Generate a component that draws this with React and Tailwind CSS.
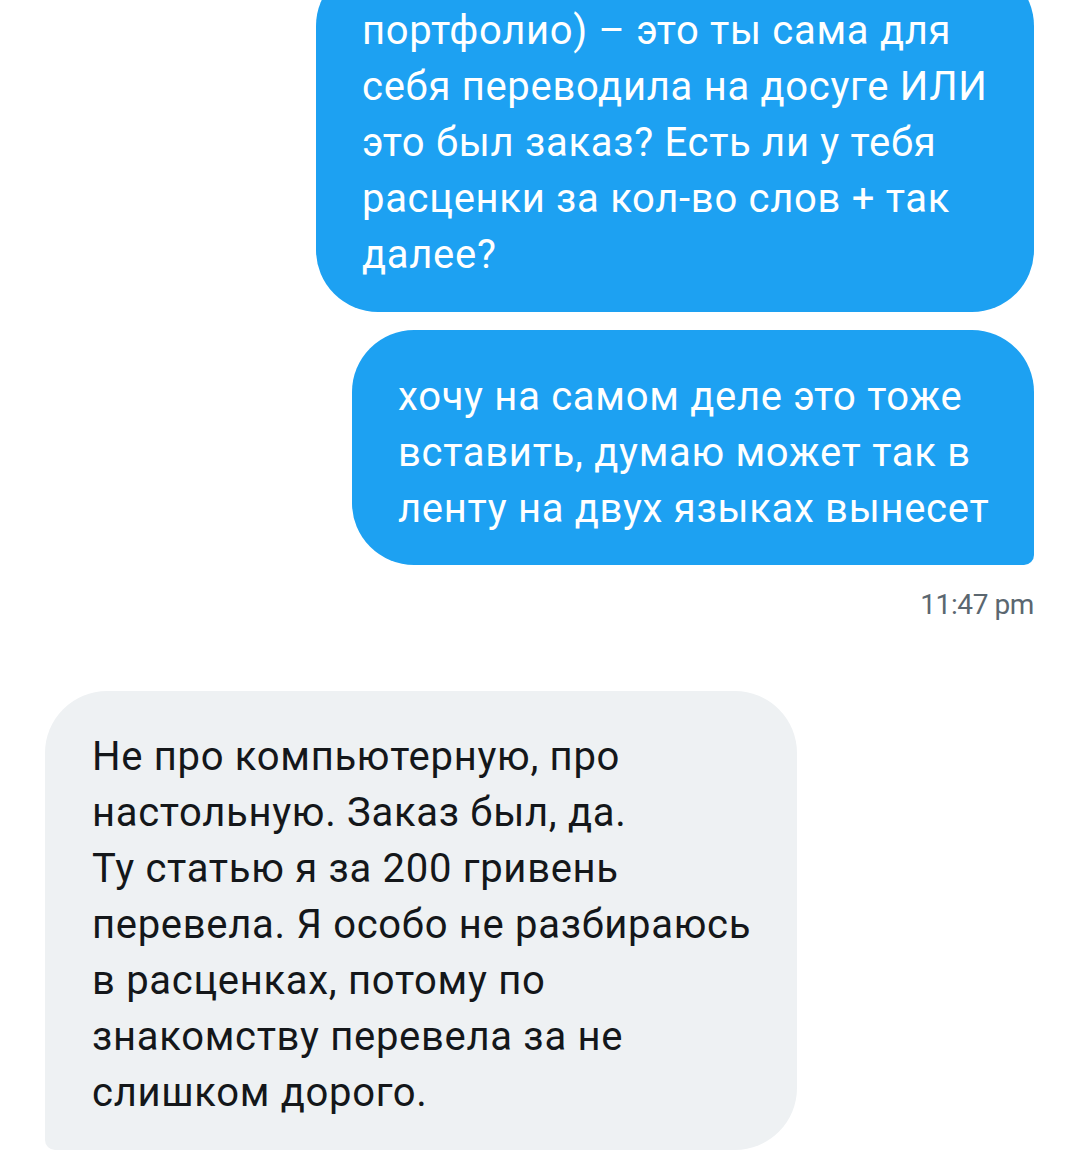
export default function App() {
  const font = { fontFamily: 'Roboto, "Noto Sans", sans-serif' };
  return (
    <div className="w-[1080px] h-[1162px] overflow-hidden bg-white" style={font}>
      <div className="flex flex-col pl-[45px] pr-[46px]">
        <div className="flex flex-col items-end mt-[-36px]">
          <div className="w-[718px] bg-[#1da1f2] text-white rounded-b-[62px] rounded-t-[62px] pl-[46px] pr-[20px] pt-[39px] pb-[29px] text-[40px] leading-[56px] tracking-[0.7px]">
            <div className="whitespace-nowrap">портфолио) – это ты сама для</div>
            <div className="whitespace-nowrap">себя переводила на досуге ИЛИ</div>
            <div className="whitespace-nowrap">это был заказ? Есть ли у тебя</div>
            <div className="whitespace-nowrap">расценки за кол-во слов + так</div>
            <div className="whitespace-nowrap">далее?</div>
          </div>
          <div className="mt-[18px] w-[682px] bg-[#1da1f2] text-white rounded-tl-[62px] rounded-tr-[62px] rounded-bl-[62px] rounded-br-[10px] pl-[46px] pr-[20px] pt-[39px] pb-[28px] text-[40px] leading-[56px] tracking-[0.7px]">
            <div className="whitespace-nowrap">хочу на самом деле это тоже</div>
            <div className="whitespace-nowrap">вставить, думаю может так в</div>
            <div className="whitespace-nowrap">ленту на двух языках вынесет</div>
          </div>
          <div className="mt-[24px] text-[28px] leading-[32px] tracking-[-0.4px] text-[#5b6770]">11:47 pm</div>
        </div>
        <div className="mt-[70px] flex">
          <div className="w-[752px] bg-[#eef1f3] text-[#14171a] rounded-tl-[62px] rounded-tr-[62px] rounded-br-[62px] rounded-bl-[10px] pl-[47px] pr-[20px] pt-[38px] pb-[29px] text-[40px] leading-[56px] tracking-[0.7px]">
            <div className="whitespace-nowrap">Не про компьютерную, про</div>
            <div className="whitespace-nowrap">настольную. Заказ был, да.</div>
            <div className="whitespace-nowrap">Ту статью я за 200 гривень</div>
            <div className="whitespace-nowrap">перевела. Я особо не разбираюсь</div>
            <div className="whitespace-nowrap">в расценках, потому по</div>
            <div className="whitespace-nowrap">знакомству перевела за не</div>
            <div className="whitespace-nowrap">слишком дорого.</div>
          </div>
        </div>
      </div>
    </div>
  );
}
